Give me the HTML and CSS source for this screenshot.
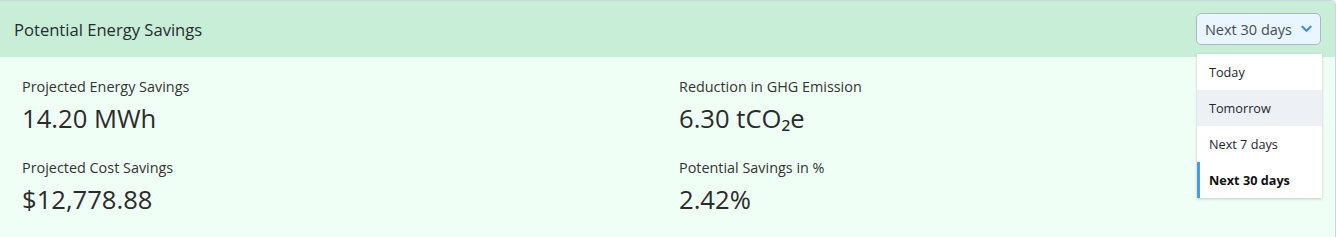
FILE: index.html
```html
<!DOCTYPE html>
<html>
<head>
    <title>Potential Energy Savings</title>
    <link rel="stylesheet" href="styles.css">
</head>
<body>
    <div class="card">
        <!-- Header -->
        <div class="card-header">
            <h2 class="card-title">Potential Energy Savings</h2>
            <div class="period-select">
                <button class="period-button">
                    <span>Next 30 days</span>
                    <svg viewBox="0 0 12 8" fill="none" stroke="currentColor" stroke-width="2.3" stroke-linecap="round" stroke-linejoin="round">
                        <polyline points="1.5 1.5 6 6 10.5 1.5"></polyline>
                    </svg>
                </button>
                <ul class="period-menu">
                    <li class="period-option">Today</li>
                    <li class="period-option hover">Tomorrow</li>
                    <li class="period-option">Next 7 days</li>
                    <li class="period-option selected">Next 30 days</li>
                </ul>
            </div>
        </div>

        <!-- Stats -->
        <div class="card-body">
            <div class="stat">
                <div class="stat-label">Projected Energy Savings</div>
                <div class="stat-value">14.20 MWh</div>
            </div>
            <div class="stat">
                <div class="stat-label">Reduction in GHG Emission</div>
                <div class="stat-value">6.30 tCO₂e</div>
            </div>
            <div class="stat">
                <div class="stat-label">Projected Cost Savings</div>
                <div class="stat-value">$12,778.88</div>
            </div>
            <div class="stat">
                <div class="stat-label">Potential Savings in %</div>
                <div class="stat-value">2.42%</div>
            </div>
        </div>
    </div>
</body>
</html>
```

FILE: styles.css
```css
body {
    margin: 0;
    font-family: "Open Sans", "Noto Sans", sans-serif;
    background: #f0fff5;
}

.card {
    border: 1px solid #cbd7e0;
    border-left: none;
    border-top-right-radius: 5px;
    background: #f0fff5;
    height: 260px;
}

.card-header {
    display: flex;
    align-items: center;
    justify-content: space-between;
    height: 56px;
    padding: 0 14px;
    background: #c8eed8;
}

.card-title {
    margin: 0;
    font-size: 16.6px;
    font-weight: 400;
    color: #262b30;
}

.period-select {
    position: relative;
}

.period-button {
    display: flex;
    align-items: center;
    gap: 9px;
    height: 32px;
    padding: 0 8px;
    border: 1px solid #a9b8c6;
    border-radius: 5px;
    background: #eaf6ff;
    font-family: inherit;
    font-size: 14.5px;
    color: #474c52;
    cursor: pointer;
}

.period-button svg {
    width: 11px;
    height: 8px;
    color: #3d8fe0;
}

.period-menu {
    position: absolute;
    top: 41px;
    left: 1px;
    width: 125px;
    margin: 0;
    padding: 0;
    list-style: none;
    background: #fff;
    box-shadow: 0 1px 3px rgba(0,0,0,0.2);
}

.period-option {
    height: 36px;
    line-height: 36px;
    padding-left: 12px;
    font-size: 12.7px;
    color: #1e2530;
    cursor: pointer;
}

.period-option.hover {
    background: #edf1f5;
}

.period-option.selected {
    font-weight: 700;
    color: #111;
    border-left: 3px solid #4a9be6;
    padding-left: 9px;
}

.card-body {
    display: grid;
    grid-template-columns: 657px 1fr;
    row-gap: 23px;
    padding: 20px 22px;
}

.stat-label {
    font-size: 14.4px;
    color: #333;
    line-height: 20px;
}

.stat-value {
    margin-top: 6px;
    font-size: 25.6px;
    color: #2b2b2b;
    line-height: 32px;
}
```
